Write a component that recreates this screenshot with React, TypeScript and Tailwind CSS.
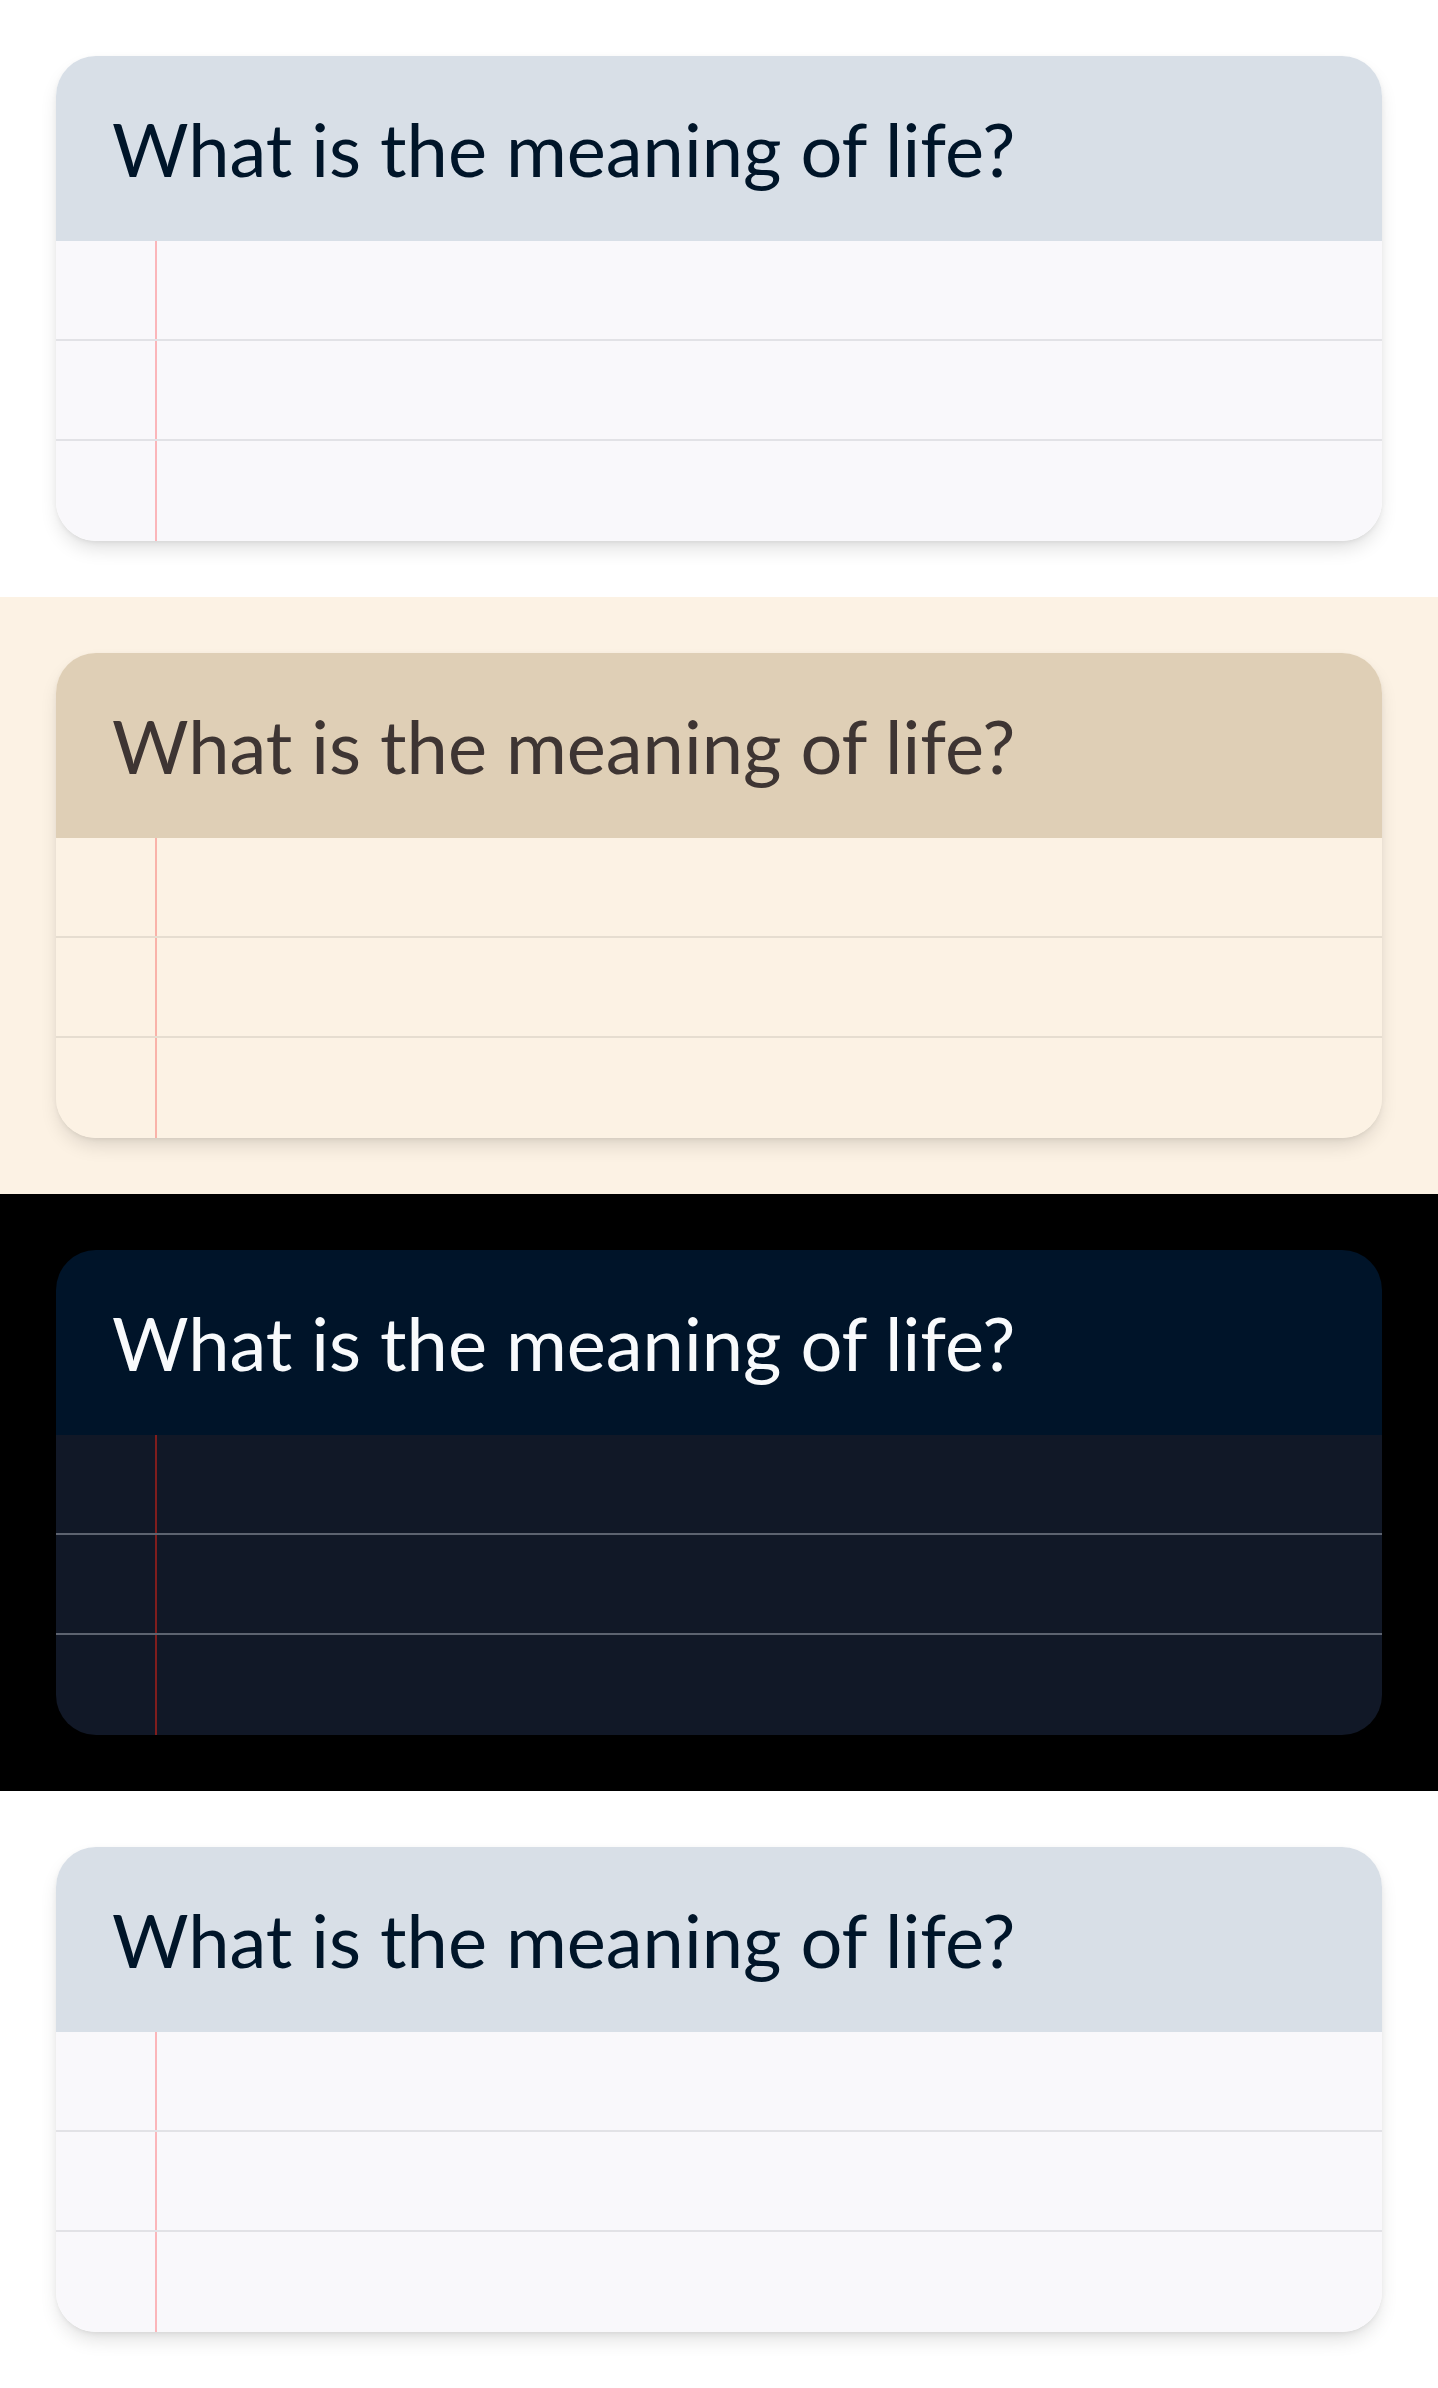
import React from 'react';

type Theme = {
  page: string;
  header: string;
  text: string;
  body: string;
  rule: string;
  margin: string;
  shadow: string;
};

const light: Theme = {
  page: 'bg-white',
  header: 'bg-[#d8dfe7]',
  text: 'text-[#001529]',
  body: 'bg-[#f9f8fb]',
  rule: 'border-[#e2e2e6]',
  margin: 'border-[#fbb6ba]',
  shadow: 'shadow-[0_10px_20px_-4px_rgba(0,0,0,0.14),0_2px_6px_-2px_rgba(0,0,0,0.1)]',
};

const sepia: Theme = {
  page: 'bg-[#fcf2e4]',
  header: 'bg-[#dfcfb6]',
  text: 'text-[#3e3533]',
  body: 'bg-[#fcf2e4]',
  rule: 'border-[#e6ddd0]',
  margin: 'border-[#f9b3a9]',
  shadow: 'shadow-[0_10px_20px_-4px_rgba(0,0,0,0.14),0_2px_6px_-2px_rgba(0,0,0,0.1)]',
};

const dark: Theme = {
  page: 'bg-black',
  header: 'bg-[#001429]',
  text: 'text-[#f8fafc]',
  body: 'bg-[#111827]',
  rule: 'border-[#5d6370]',
  margin: 'border-[#7f1d1d]',
  shadow: 'shadow-none',
};

function Card({ t }: { t: Theme }) {
  return (
    <section className={`${t.page} h-[597px] p-14`}>
      <div className={`rounded-[40px] overflow-hidden ${t.shadow}`}>
        {/* Question */}
        <div className={`${t.header} h-[185px] px-14 flex items-center`}>
          <h2 className={`${t.text} text-[74px] leading-none font-normal`}>
            What is the meaning of life?
          </h2>
        </div>

        {/* Ruled paper */}
        <div className={t.body}>
          {[0, 1, 2].map((i) => (
            <div key={i} className={`h-[100px] flex ${i < 2 ? `border-b-2 ${t.rule}` : ''}`}>
              <div className={`w-[101px] h-full border-r-2 ${t.margin}`} />
              <div className="flex-1" />
            </div>
          ))}
        </div>
      </div>
    </section>
  );
}

export default function App() {
  return (
    <div className="w-[1438px] font-['Lato',sans-serif]">
      <Card t={light} />
      <Card t={sepia} />
      <Card t={dark} />
      <Card t={light} />
    </div>
  );
}
